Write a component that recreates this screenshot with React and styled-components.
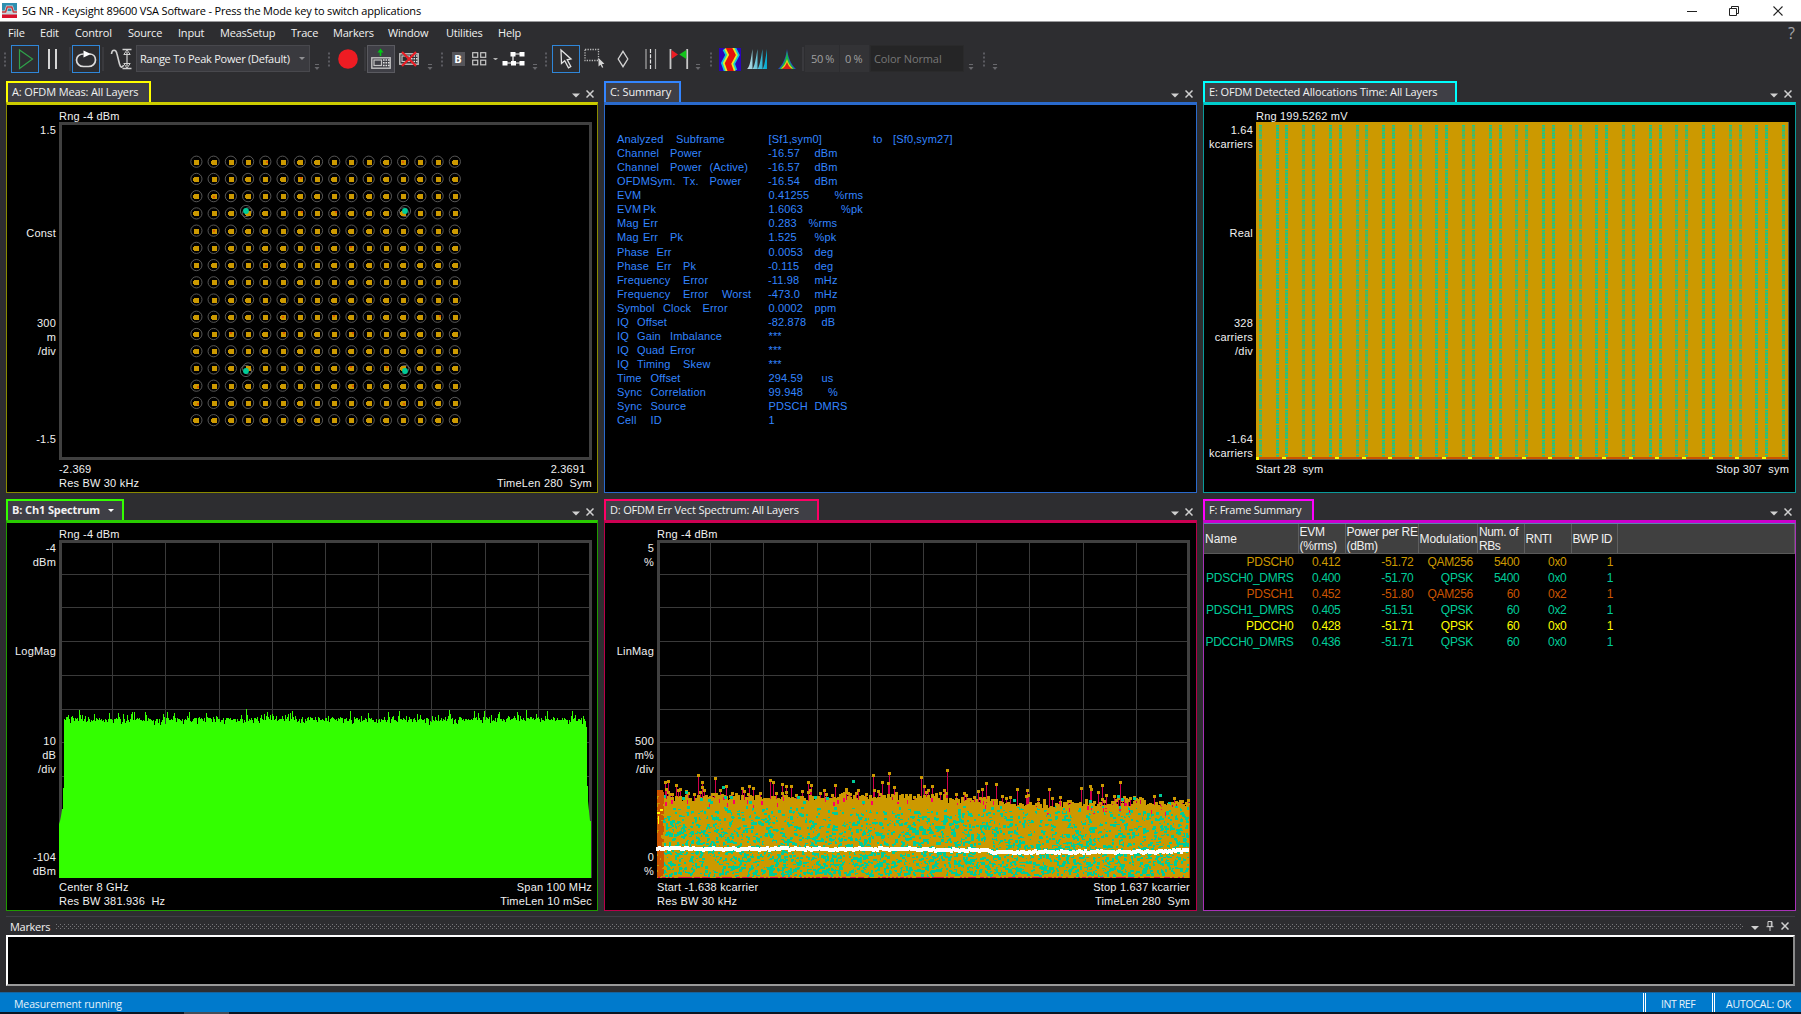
import React from "react";
import styled, { createGlobalStyle, css } from "styled-components";

const GlobalStyle = createGlobalStyle`
  * { box-sizing: border-box; }
  html, body { margin: 0; padding: 0; background: #2d2d30; }
  body { overflow: hidden; }
`;

const UI_FONT = `"Open Sans", "Noto Sans", sans-serif`;
const PLOT_FONT = `"Liberation Sans", Arial, sans-serif`;

const GOLD = "#cc9900";
const TEAL = "#00cc99";
const RUST = "#cc5500";
const YELLOW = "#ffff00";

/* ---------- application shell ---------- */

const Shell = styled.div`
  width: 1801px;
  height: 1014px;
  display: flex;
  flex-direction: column;
  background: #2d2d30;
  color: #f1f1f1;
  font-family: ${UI_FONT};
  font-size: 11px;
  overflow: hidden;
`;

const TitleBar = styled.header`
  flex: 0 0 22px;
  display: flex;
  align-items: center;
  padding-left: 2px;
  background: #fff;
  color: #000;
  border-bottom: 1px solid #9b9b9d;
`;

const TitleText = styled.span`
  flex: 1;
  margin-left: 4px;
  letter-spacing: ${(p) => p.$track}px;
  white-space: nowrap;
`;

const WindowButton = styled.span`
  flex: 0 0 ${(p) => p.$w}px;
  display: flex;
  justify-content: center;
`;

const MenuBar = styled.nav`
  flex: 0 0 22px;
  display: flex;
  align-items: center;
  padding-left: 8px;
`;

const MenuItem = styled.span`
  flex: 0 0 ${(p) => p.$w}px;
  min-width: 0;
  line-height: 16px;
  letter-spacing: ${(p) => p.$track || 0}px;
  white-space: nowrap;
`;

const HelpMark = styled.span`
  margin-left: auto;
  margin-right: 6px;
  font-size: 16px;
  line-height: 16px;
  color: #a4a4a8;
`;

/* ---------- toolbar ---------- */

const ToolBar = styled.div`
  flex: 0 0 37px;
  display: flex;
  align-items: flex-start;
  padding-top: 1px;
`;

const Tool = styled.span`
  flex: 0 0 ${(p) => p.$w}px;
  min-width: 0;
  height: ${(p) => p.$h || 28}px;
  display: flex;
  align-items: center;
  justify-content: center;
  ${(p) =>
    p.$frame &&
    css`
      border: 1px solid ${p.$frame};
      background: ${p.$fill || "transparent"};
    `}
  svg { display: block; flex: none; }
`;

const Combo = styled.span`
  flex: 0 0 ${(p) => p.$w}px;
  min-width: 0;
  height: 27px;
  display: flex;
  align-items: center;
  padding: 0 4px 0 ${(p) => p.$pad || 4}px;
  background: ${(p) => p.$bg};
  border: 1px solid ${(p) => p.$line};
  color: ${(p) => p.$ink};
  letter-spacing: ${(p) => p.$track || 0}px;
  margin-right: ${(p) => p.$after || 0}px;
  white-space: nowrap;
`;

const ComboText = styled.span`
  flex: 1;
`;

/* ---------- trace panels ---------- */

const Workspace = styled.main`
  flex: 0 0 830px;
  display: grid;
  grid-template-columns: 592px 593px 593px;
  grid-template-rows: 412px 412px;
  gap: 6px;
  padding-left: 6px;
`;

const Panel = styled.section`
  display: flex;
  flex-direction: column;
  min-width: 0;
  min-height: 0;
`;

const TabStrip = styled.div`
  flex: 0 0 21px;
  min-height: 0;
  display: flex;
  align-items: stretch;
  padding-right: 1px;
`;

const Tab = styled.div`
  width: ${(p) => p.$w}px;
  border: 2px solid ${(p) => p.$color};
  border-bottom: 0;
  background: #3f3f46;
  display: flex;
  align-items: center;
  gap: 8px;
  padding: 0 0 1px 4px;
  font-weight: ${(p) => (p.$active ? 700 : 400)};
  letter-spacing: ${(p) => p.$track || 0}px;
  white-space: nowrap;
  line-height: 16px;
`;

const StripButtons = styled.div`
  margin-left: auto;
  display: flex;
  align-items: center;
  padding-top: 4px;
`;

const Screen = styled.div`
  flex: 1;
  background: #000;
  border: 1px solid ${(p) => p.$edge};
  border-top: 3px solid ${(p) => p.$bar};
  font-family: ${PLOT_FONT};
  font-size: 11px;
  line-height: 14px;
  min-height: 0;
`;

const PlotGrid = styled.div`
  display: grid;
  grid-template-columns: 52px 533px;
  grid-template-rows: 17px 338px 28px;
  white-space: pre;
  letter-spacing: 0.2px;
`;

const RangeText = styled.div`
  grid-column: 2;
  padding-top: 4px;
  line-height: 15px;
`;

const AxisColumn = styled.div`
  display: grid;
  grid-template-rows: 103px 90px 116px 28px;
  padding: 1px 3px 0 0;
  text-align: right;
`;

const PlotArea = styled.div`
  svg { display: block; }
`;

const Footer = styled.div`
  grid-column: 2;
  display: flex;
  justify-content: space-between;
  padding-top: 2px;
`;

const FooterSide = styled.div`
  text-align: ${(p) => p.$align || "left"};
`;

/* ---------- summary text ---------- */

const SummaryList = styled.div`
  padding: 27px 0 0 12px;
  color: #3385ff;
`;

const SummaryRow = styled.div`
  display: flex;
  height: 14.07px;
  line-height: 14px;
`;

const Word = styled.span`
  flex: 0 0 ${(p) => p.$w}px;
  min-width: 0;
  white-space: nowrap;
  letter-spacing: 0.15px;
`;

/* ---------- frame summary table ---------- */

const FrameTable = styled.div`
  border-top: 1px solid #5b86b0;
`;

const HeadRow = styled.div`
  display: flex;
  height: 30px;
  background: #404040;
  border-bottom: 1px solid #5a5a5a;
`;

const HeadCell = styled.div`
  flex: ${(p) => (p.$w ? `0 0 ${p.$w}px` : 1)};
  min-width: 0;
  display: flex;
  align-items: center;
  padding-left: 1px;
  border-right: 1px solid #5e5e5e;
  font-size: 12px;
  line-height: 14px;
  white-space: pre;
  letter-spacing: ${(p) => p.$track || 0}px;
`;

const DataRow = styled.div`
  display: flex;
  height: 15.95px;
  font-size: 12px;
  line-height: 16px;
  color: ${(p) => p.$ink};
`;

const DataCell = styled.div`
  flex: 0 0 ${(p) => p.$w}px;
  min-width: 0;
  padding-right: 5px;
  text-align: right;
  white-space: nowrap;
  letter-spacing: -0.3px;
`;

/* ---------- markers and status ---------- */

const MarkersPanel = styled.section`
  flex: 0 0 70px;
  margin: 5px 6px 6px 6px;
  display: flex;
  flex-direction: column;
  border-top: 1px solid #3f3f46;
`;

const MarkersHead = styled.div`
  flex: 0 0 18px;
  display: flex;
  align-items: center;
  padding-left: 4px;
`;

const Grip = styled.span`
  flex: 0 0 1688px;
  height: 5px;
  margin-left: 6px;
  background-image: linear-gradient(90deg, #77777a 1px, transparent 1px),
    linear-gradient(90deg, transparent 2px, #77777a 2px, #77777a 3px, transparent 3px),
    linear-gradient(90deg, #77777a 1px, transparent 1px);
  background-size: 4px 1px, 4px 1px, 4px 1px;
  background-position: 0 0, 0 2px, 0 4px;
  background-repeat: repeat-x;
`;

const MarkersTitle = styled.span`
  flex: 0 0 40px;
  min-width: 0;
  letter-spacing: ${(p) => p.$track || 0}px;
`;

const MarkersBody = styled.div`
  flex: 1;
  background: #000;
  border: 2px solid #fff;
  border-right-color: #8a8a8a;
  border-bottom-color: #9a9a9a;
`;

const StatusBar = styled.footer`
  flex: 0 0 20px;
  display: flex;
  align-items: stretch;
  background: #007acc;
  border-top: 1px solid #16639c;
  font-size: 10.5px;
  line-height: 15px;
  color: #e6f2fb;
`;

const StatusText = styled.span`
  flex: 1;
  padding: 4px 0 0 14px;
  letter-spacing: ${(p) => p.$track || 0}px;
`;

const StatusCell = styled.span`
  flex: 0 0 ${(p) => p.$w}px;
  min-width: 0;
  border-left: 3px double #fff;
  padding: 4px 0 0 ${(p) => p.$pad}px;
  letter-spacing: ${(p) => p.$track || 0}px;
  white-space: nowrap;
`;

const TaskEdge = styled.div`
  flex: 0 0 2px;
  background: #0b1622;
  padding-left: 184px;
  &::before {
    content: "";
    display: block;
    width: 45px;
    height: 2px;
    background: #474e57;
  }
`;

/* ---------- icons ---------- */

const Svg = ({ w, h, children }) => (
  <svg width={w} height={h} viewBox={`0 0 ${w} ${h}`} fill="none">
    {children}
  </svg>
);

const GripDots = () => (
  <Svg w={3} h={28}>
    {[8, 12, 16, 20].map((y) => (
      <rect key={y} x="0" y={y - 0.5} width="2" height="2" fill="#5b5b60" />
    ))}
  </Svg>
);

const Overflow = () => (
  <Svg w={6} h={28}>
    <path d="M1 19.5h4" stroke="#68686c" />
    <path d="M0.5 22h5L3 25z" fill="#68686c" />
  </Svg>
);

const Separator = () => (
  <Svg w={2} h={28}>
    <path d="M1 2v24" stroke="#46464a" />
  </Svg>
);

const Caret = ({ color = "#c8c8c8", w = 8 }) => (
  <Svg w={w} h={w / 2}>
    <path d={`M0 0h${w}L${w / 2} ${w / 2}z`} fill={color} />
  </Svg>
);

const CloseX = ({ size = 8, color = "#d0d0d0", width = 1.5 }) => (
  <Svg w={size} h={size}>
    <path d={`M.5 .5L${size - 0.5} ${size - 0.5}M${size - 0.5} .5L.5 ${size - 0.5}`} stroke={color} strokeWidth={width} />
  </Svg>
);

const AppIcon = () => (
  <Svg w={16} h={16}>
    <rect x="0" y="0" width="15" height="9" fill="#2f8fb0" />
    <rect x="0" y="8" width="15" height="4" fill="#c4d2d8" />
    <rect x="0" y="11.5" width="15" height="3.5" fill="#d8122d" />
    <path d="M0 9h3.600L5.200 4h4.600l1.600 5H15" stroke="#c9dde4" strokeWidth="2.800" />
    <path d="M0 9h3.600L5.200 4h4.600l1.600 5H15" stroke="#c8383c" strokeWidth="1.500" />
  </Svg>
);

const PlayIcon = () => (
  <Svg w={26} h={26}>
    <path d="M7.5 4v18.5L20.5 13z" stroke="#2fa04a" strokeWidth="1.2" />
  </Svg>
);

const PauseIcon = () => (
  <Svg w={12} h={22}>
    <path d="M2 1v20M9 1v20" stroke="#d6d6d6" strokeWidth="2" />
  </Svg>
);

const LoopIcon = () => (
  <Svg w={24} h={24}>
    <path d="M9.5 7C5.5 7 2.5 9.500 2.500 13s3 6.500 7 6.500h5c4 0 7-3 7-6.500s-2.500-6-6-6" stroke="#dcdcdc" strokeWidth="1.7" />
    <path d="M9.500 3.500v7L17 7z" fill="#fff" />
  </Svg>
);

const RangeIcon = () => (
  <Svg w={22} h={24}>
    <path d="M1.500 7C2 2 6 2 7 7l2.500 10c1 4 3 4 4 1" stroke="#d0d0d0" strokeWidth="1.6" />
    <path d="M12.500 2.500h9M12.500 21.500h9" stroke="#d0d0d0" strokeWidth="1.4" />
    <path d="M17 5v14" stroke="#d0d0d0" strokeWidth="1.2" />
    <path d="M17 3l3.200 4.500h-6.400zM17 21l3.200-4.500h-6.400z" stroke="#d0d0d0" />
  </Svg>
);

const RecordIcon = () => (
  <Svg w={20} h={20}>
    <circle cx="10" cy="10" r="9.800" fill="#ee1c23" />
  </Svg>
);

const Instrument = () => (
  <>
    <rect x=".8" y="9.800" width="18.400" height="10.400" stroke="#c4c4c4" strokeWidth="1.400" />
    <rect x="3" y="12" width="7.500" height="5.500" stroke="#c4c4c4" strokeWidth="1.200" />
    {[12, 14.7, 17.4].map((y) => (
      <path key={y} d={`M12 ${y}h1.600M14.500 ${y}h1.600M17 ${y}h1.600`} stroke="#e0e0e0" strokeWidth="1.500" />
    ))}
  </>
);

const InstrumentOnIcon = () => (
  <Svg w={20} h={22}>
    <Instrument />
    <path d="M9.500 8V4" stroke="#00c814" strokeWidth="1.600" />
    <path d="M6.500 4.500h6L9.500 .5z" fill="#00c814" />
  </Svg>
);

const InstrumentOffIcon = () => (
  <Svg w={20} h={28}>
    <g transform="translate(0 -1)">
      <Instrument />
    </g>
    <path d="M3 7l14 14M17 7L3 21" stroke="#e81e25" strokeWidth="2.200" />
  </Svg>
);

const BoldBadge = styled.span`
  width: 13px;
  height: 14px;
  background: #55555a;
  color: #fff;
  font-size: 11px;
  line-height: 14px;
  font-weight: 700;
  text-align: center;
`;

const LayoutIcon = () => (
  <Svg w={16} h={14}>
    {[0, 8].map((x) =>
      [0, 7.5].map((y) => (
        <rect key={`${x}-${y}`} x={x + 0.7} y={y + 0.7} width="5" height="4.600" stroke="#c8c8c8" strokeWidth="1.200" />
      ))
    )}
  </Svg>
);

const BlocksIcon = () => (
  <Svg w={24} h={16}>
    <path d="M10.500 3h9M3 12h18M11 3v9" stroke="#fff" strokeWidth="1.200" />
    {[[8.5, 1], [17.5, 1], [0.5, 10], [9, 10], [17.5, 10]].map(([x, y]) => (
      <rect key={`${x}-${y}`} x={x} y={y} width="5" height="4.500" fill="#fff" />
    ))}
  </Svg>
);

const PointerIcon = () => (
  <Svg w={14} h={22}>
    <path d="M2 2l.5 13.500 3.200-2.700 3.800 7 2.300-1.300-3.600-6.700 3.800-.8z" stroke="#e2e2e2" strokeWidth="1.300" />
  </Svg>
);

const SelectIcon = () => (
  <Svg w={21} h={22}>
    <rect x="1" y="1.500" width="13.500" height="11" stroke="#b8b8b8" strokeWidth="1.300" strokeDasharray="1.300 1.200" />
    <path d="M14.500 10v8.500l2-1.700 1.600 3 1.200-.6-1.500-3 2.600-.4z" fill="#d6d6d6" />
  </Svg>
);

const DiamondIcon = () => (
  <Svg w={12} h={18}>
    <path d="M6 1.300L10.800 9 6 16.700 1.200 9z" stroke="#d4d4d4" strokeWidth="1.300" />
  </Svg>
);

const BandIcon = () => (
  <Svg w={12} h={22}>
    <path d="M1 1v20M10.500 1v20" stroke="#a8a8a8" strokeWidth="1.200" />
    <path d="M5.500 1v20" stroke="#e6e6e6" strokeWidth="1.200" strokeDasharray="4 1.300" />
  </Svg>
);

const FlagsIcon = () => (
  <Svg w={20} h={22}>
    <path d="M1.500 1v20M18.200 1v20" stroke="#c8c8c8" strokeWidth="1.800" />
    <path d="M2.500 2l6.500 4.500-6.500 4.500z" fill="#ee1c23" />
    <path d="M17.300 2l-7 4.500 7 4.500z" fill="#12c41a" />
  </Svg>
);

const SpectrogramIcon = () => (
  <Svg w={22} h={23}>
    <rect width="22" height="23" fill="#2a05b8" />
    {[["#12c8d8", 13], ["#e8ee20", 9.5], ["#e81208", 6]].map(([c, w]) => (
      <path key={c} d="M9.500 -1L13.500 7 9 15.500 12 24" stroke={c} strokeWidth={w} />
    ))}
  </Svg>
);

const WaterfallIcon = () => (
  <Svg w={22} h={22}>
    <defs>
      <linearGradient id="fall" x1="0" x2="1">
        <stop offset="0" stopColor="#c8dce0" />
        <stop offset="1" stopColor="#00a8d0" />
      </linearGradient>
    </defs>
    <path
      d="M0 21C3 19 4 10 5.500 1v20zM5.500 21C7.500 19 9 10 10.500 1v20zM10.500 21c2-2 3.500-11 5-20v20zM15.500 21c2-2 3-11 4.500-20v20z"
      fill="url(#fall)"
    />
  </Svg>
);

const PersistenceIcon = () => (
  <Svg w={18} h={22}>
    <path d="M9 1c1 8 4 16 9 20H0C5 17 8 9 9 1z" fill="#2a48c8" />
    <path d="M9 3c1 8 3.500 14 7.500 18h-15C5.500 17 8 11 9 3z" fill="#18b848" />
    <path d="M9 11c1 4 3 7 6 9.500H3C6 18 8 15 9 11z" fill="#e8d818" />
    <path d="M9 14c1 3 2.500 5 5 7H4c2.500-2 4-4 5-7z" fill="#d82018" />
  </Svg>
);

const PinIcon = () => (
  <Svg w={8} h={10}>
    <path d="M2 .5h4v5H2zM.5 5.700h7M4 6v4M5.300 .5v5" stroke="#d0d0d0" />
  </Svg>
);

/* ---------- plot drawings ---------- */

const PW = 533;
const PH = 338;

function makeRandom(seed) {
  let s = seed;
  return () => {
    s = (s * 1664525 + 1013904223) % 4294967296;
    return s / 4294967296;
  };
}

const box = (x, y, w, h) => `M${x} ${y}h${w}v${h}h-${w}z`;

const Frame = () => (
  <rect x="1.500" y="1.500" width={PW - 3} height={PH - 3} stroke="#404040" strokeWidth="3" fill="none" />
);

const GridLines = () => {
  let d = "";
  for (let i = 1; i < 10; i++) {
    d += box(Math.round(i * 53.2), 3, 1, PH - 6) + box(3, Math.round(i * 33.7), PW - 6, 1);
  }
  return <path d={d} fill="#3a3a3a" />;
};

function Constellation() {
  const rnd = makeRandom(7);
  const step = 17.23;
  const rings = [];
  let dots = "";
  let hot = "";
  for (let r = 0; r < 16; r++) {
    for (let c = 0; c < 16; c++) {
      const x = 137.4 + c * step;
      const y = 39.7 + r * step;
      rings.push(<circle key={`${r}-${c}`} cx={x} cy={y} r="5.600" />);
      const px = Math.round(x) - 2;
      const py = Math.round(y) - 2;
      dots += box(px, py, 5, 5) + (rnd() > 0.5 ? box(px - 1, py + 1, 6, 3) : "");
      if (rnd() > 0.93) hot += box(px + 1 + Math.floor(rnd() * 3), py + Math.floor(rnd() * 3), 2, 2);
    }
  }
  const pilots = [[187, 89], [346, 89], [187, 249], [346, 249]];
  return (
    <svg width={PW} height={PH}>
      <Frame />
      <g fill="none" stroke="#606060" strokeWidth=".9">
        {rings}
        {pilots.map(([x, y]) => (
          <circle key={`${x}-${y}`} cx={x} cy={y} r="5.600" />
        ))}
      </g>
      <path d={dots} fill={GOLD} shapeRendering="crispEdges" />
      <path d={hot} fill="#dd5a00" shapeRendering="crispEdges" />
      {pilots.map(([x, y]) => (
        <circle key={`${x}-${y}`} cx={x} cy={y} r="2.900" fill={TEAL} />
      ))}
    </svg>
  );
}

function Spectrum() {
  const rnd = makeRandom(21);
  let d = `M0 ${PH}V284L1 281 2 276 3 270V269h1V248h1V184`;
  for (let x = 5; x < 527; x++) {
    const n = rnd();
    let y = 180 - Math.round(rnd() * 3) + Math.round(rnd() * 2);
    if (n > 0.95) y -= 5 + Math.round(rnd() * 4);
    else if (n > 0.72) y -= 2 + Math.round(rnd() * 2);
    else if (n < 0.12) y += 3;
    d += `V${y}h1`;
  }
  d += `V187h1V246h1V261l2 20h1V${PH}z`;
  return (
    <svg width={PW} height={PH}>
      <GridLines />
      <Frame />
      <path d={d} fill="#33ff00" />
    </svg>
  );
}

const SPIKES = [
  [41, 235], [58, 238], [216, 235], [232, 233], [264, 237], [290, 230], [463, 242], [329, 243], [339, 244],
  [113, 240], [116, 242], [151, 242], [11, 241], [8, 242], [433, 246], [445, 245], [125, 244], [129, 246],
  [134, 246], [154, 245], [45, 242], [92, 246], [96, 248], [225, 242], [231, 243], [360, 249], [370, 250],
  [178, 245], [189, 249], [392, 249], [424, 248], [434, 249],
];

function ErrorVector() {
  const rnd = makeRandom(99);
  const top = (x) => {
    if (x < 220) return 258;
    if (x < 290) return 257;
    if (x < 340) return 260;
    if (x < 400) return 265;
    return 264;
  };
  let stems = "";
  let body = "";
  let teal = "";
  let heads = "";
  let gaps = "";
  for (let x = 0; x < PW - 2; x += 2) {
    const y = top(x) + Math.round((rnd() - 0.5) * 7);
    body += box(x, y, 3, PH - y);
    if (rnd() > 0.45) {
      const up = Math.round(y - 2 - rnd() * rnd() * 13);
      heads += box(x, up, 3, 3);
      stems += box(x + 1, up + 2, 1, y - up);
    }
    if (rnd() > 0.83) gaps += box(x, y + 1 + Math.round(rnd() * 4), 1 + Math.round(rnd()), 4);
  }
  SPIKES.forEach(([x, y]) => {
    heads += box(x - 1, y - 1, 3, 3);
    stems += box(x, y, 1, 270 - y);
  });
  for (let i = 0; i < 3000; i++) {
    const x = Math.floor(rnd() * 525) + 6;
    const y = 266 + Math.floor(Math.pow(rnd(), 0.72) * 69);
    teal += box(x, y, rnd() > 0.5 ? 3 : 2, rnd() > 0.5 ? 3 : 2);
  }
  for (let i = 0; i < 20; i++) teal += box(Math.floor(rnd() * 525), 254 + Math.floor(rnd() * 10), 3, 3);
  teal += box(195, 240, 3, 3) + box(65, 246, 3, 3) + box(28, 251, 3, 3);
  let over = "";
  for (let i = 0; i < 1900; i++) {
    over += box(Math.floor(rnd() * 527) + 3, 264 + Math.floor(rnd() * 72), 3, 2);
  }
  let rust = "";
  for (let i = 0; i < 170; i++) rust += box(Math.floor(rnd() * 5), 250 + Math.floor(rnd() * 85), 3, 3);
  let mean = "";
  let base = "";
  for (let x = -1; x < PW - 2; x += 2) {
    const level = x < 30 ? 306.5 : x < 270 ? 307 : x < 330 ? 308 : x < 500 ? 310 : 309;
    mean += box(x, Math.round(level + (rnd() - 0.5) * 1.6), 3, 4);
    if (rnd() > 0.4) base += box(Math.max(x, 0), 337, 2, 1);
  }
  return (
    <svg width={PW} height={PH} shapeRendering="crispEdges" overflow="visible">
      <GridLines />
      <Frame />
      <path d={stems} fill="#d0004c" />
      <path d={body} fill={GOLD} />
      <path d={gaps} fill="#ff0066" />
      <path d={heads} fill={GOLD} />
      <path d={teal} fill={TEAL} />
      <path d={over} fill={GOLD} />
      <path d={rust} fill={RUST} />
      <path d={box(3, 269, 3, 2) + box(0, 272, 3, 2) + box(1, 276, 1, 8)} fill={YELLOW} />
      <path d={box(532, 265, 1, 73)} fill={RUST} />
      <path d={base} fill="#e0104c" />
      <path d={mean} fill="#fff" />
    </svg>
  );
}

function Allocations() {
  let faint = "";
  let bright = "";
  let marks = box(0, 335, 3, 3);
  for (let i = 0; i < 20; i++) {
    [2.8, 19.6].forEach((off, k) => {
      const x = Math.round(i * 26.65 + off);
      const strong = (i + k) % 2;
      for (let y = 3; y < 334; y += 15) {
        const h = Math.min(14, 336 - y);
        faint += box(x, y, 3, h);
        [0, 3, 5, 8, 10, 12].forEach((dy, j) => {
          if (y + dy < 335 && (strong || j % 2 === 0)) bright += box(x, y + dy, 3, 1);
        });
      }
    });
    if (i) marks += box(Math.round(i * 26.68 - 1), 335, 4, 2);
  }
  return (
    <svg width={PW} height={PH} shapeRendering="crispEdges">
      <rect width={PW} height={PH} fill="#5a5a50" />
      <rect width={PW - 1} height={PH - 1} fill={GOLD} />
      <path d={faint} fill="#66b04d" />
      <path d={bright} fill="#12c890" />
      <rect y="335" width={PW - 1} height="2" fill={RUST} />
      <path d={marks} fill={YELLOW} />
    </svg>
  );
}

/* ---------- panels ---------- */

const TracePanel = ({ title, tabWidth, track, color, bar, edge, active, children }) => (
  <Panel>
    <TabStrip>
      <Tab $w={tabWidth} $color={color} $active={active} $track={track}>
        {title}
        {active && <Caret color="#fff" w={6} />}
      </Tab>
      <StripButtons>
        <Tool $w={15} $h={12}>
          <Svg w={8} h={10}><path d="M0 4.500h8L4 8.500z" fill="#d0d0d0" /></Svg>
        </Tool>
        <Tool $w={14} $h={12}>
          <CloseX />
        </Tool>
      </StripButtons>
    </TabStrip>
    <Screen $bar={bar} $edge={edge}>{children}</Screen>
  </Panel>
);

const Plot = ({ range, axis, left, right, children }) => (
  <PlotGrid>
    <RangeText>{range}</RangeText>
    <AxisColumn>
      {axis.map((t) => (
        <div key={t}>{t}</div>
      ))}
    </AxisColumn>
    <PlotArea>{children}</PlotArea>
    <Footer>
      <FooterSide>{left}</FooterSide>
      <FooterSide $align="right">{right}</FooterSide>
    </Footer>
  </PlotGrid>
);

/* Each word carries the tab stop at which it starts, in pixels from the row's left edge. */
const SUMMARY = [
  [["Analyzed", 0], ["Subframe", 59], ["[Sf1,sym0]", 151.500], ["to", 256], ["[Sf0,sym27]", 276]],
  [["Channel", 0], ["Power", 53], ["-16.57", 151], ["dBm", 197.500]],
  [["Channel", 0], ["Power", 53], ["(Active)", 92.500], ["-16.57", 151], ["dBm", 197.500]],
  [["OFDMSym.", 0], ["Tx.", 66], ["Power", 92.500], ["-16.54", 151], ["dBm", 197.500]],
  [["EVM", 0], ["0.41255", 151.500], ["%rms", 217.500]],
  [["EVM", 0], ["Pk", 26], ["1.6063", 151.500], ["%pk", 224]],
  [["Mag", 0], ["Err", 26], ["0.283", 151.500], ["%rms", 191.500]],
  [["Mag", 0], ["Err", 26], ["Pk", 53], ["1.525", 151.500], ["%pk", 197.500]],
  [["Phase", 0], ["Err", 39.500], ["0.0053", 151.500], ["deg", 197.500]],
  [["Phase", 0], ["Err", 39.500], ["Pk", 66], ["-0.115", 151], ["deg", 197.500]],
  [["Frequency", 0], ["Error", 66], ["-11.98", 151], ["mHz", 197.500]],
  [["Frequency", 0], ["Error", 66], ["Worst", 105], ["-473.0", 151], ["mHz", 197.500]],
  [["Symbol", 0], ["Clock", 46], ["Error", 85.500], ["0.0002", 151.500], ["ppm", 197.500]],
  [["IQ", 0], ["Offset", 20], ["-82.878", 151], ["dB", 204.500]],
  [["IQ", 0], ["Gain", 20], ["Imbalance", 53], ["***", 151.500]],
  [["IQ", 0], ["Quad", 20], ["Error", 53], ["***", 151.500]],
  [["IQ", 0], ["Timing", 20], ["Skew", 66], ["***", 151.500]],
  [["Time", 0], ["Offset", 33.500], ["294.59", 151.500], ["us", 204.500]],
  [["Sync", 0], ["Correlation", 33.500], ["99.948", 151.500], ["%", 211]],
  [["Sync", 0], ["Source", 33.500], ["PDSCH", 151.500], ["DMRS", 197.500]],
  [["Cell", 0], ["ID", 33.500], ["1", 151.500]],
];

const Summary = () => (
  <SummaryList>
    {SUMMARY.map((words, r) => (
      <SummaryRow key={r}>
        {words.map(([text, at], i) => (
          <Word key={i} $w={(words[i + 1] ? words[i + 1][1] : at + 60) - at}>{text}</Word>
        ))}
      </SummaryRow>
    ))}
  </SummaryList>
);

const COLUMNS = [
  ["Name", 94.500, 0], ["EVM\n(%rms)", 47, -0.25], ["Power per RE\n(dBm)", 73, -0.3], ["Modulation", 59.500, -0.1],
  ["Num. of\nRBs", 46.500, -0.4], ["RNTI", 47, -0.5], ["BWP ID", 46.500, -0.5],
];

const FRAMES = [
  [GOLD, "PDSCH0", "0.412", "-51.72", "QAM256", "5400", "0x0", "1"],
  [TEAL, "PDSCH0_DMRS", "0.400", "-51.70", "QPSK", "5400", "0x0", "1"],
  [RUST, "PDSCH1", "0.452", "-51.80", "QAM256", "60", "0x2", "1"],
  [TEAL, "PDSCH1_DMRS", "0.405", "-51.51", "QPSK", "60", "0x2", "1"],
  [YELLOW, "PDCCH0", "0.428", "-51.71", "QPSK", "60", "0x0", "1"],
  [TEAL, "PDCCH0_DMRS", "0.436", "-51.71", "QPSK", "60", "0x0", "1"],
];

const FrameSummary = () => (
  <FrameTable>
    <HeadRow>
      {COLUMNS.map(([name, w, track]) => (
        <HeadCell key={name} $w={w} $track={track}>{name}</HeadCell>
      ))}
      <HeadCell />
    </HeadRow>
    {FRAMES.map(([ink, ...cells]) => (
      <DataRow key={cells[0]} $ink={ink}>
        {cells.map((c, i) => (
          <DataCell key={i} $w={COLUMNS[i][1]}>{c}</DataCell>
        ))}
      </DataRow>
    ))}
  </FrameTable>
);

const MENU = [
  ["File", 32], ["Edit", 35], ["Control", 53], ["Source", 50], ["Input", 42], ["MeasSetup", 71],
  ["Trace", 42], ["Markers", 55], ["Window", 58], ["Utilities", 52], ["Help", 30],
];

export default function App() {
  return (
    <Shell>
      <GlobalStyle />
      <TitleBar>
        <AppIcon />
        <TitleText $track={-0.17}>5G NR - Keysight 89600 VSA Software - Press the Mode key to switch applications</TitleText>
        <WindowButton $w={44}><Svg w={10} h={10}><path d="M0 5.500h10" stroke="#222" /></Svg></WindowButton>
        <WindowButton $w={40}>
          <Svg w={10} h={10}><path d="M.5 2.500h7v7h-7zM2.500 2V.5h7v7H8" stroke="#222" /></Svg>
        </WindowButton>
        <WindowButton $w={47}><CloseX size={10} color="#222" width={1.1} /></WindowButton>
      </TitleBar>

      <MenuBar>
        {MENU.map(([name, w]) => (
          <MenuItem key={name} $w={w} $track={-0.2}>{name}</MenuItem>
        ))}
        <HelpMark>?</HelpMark>
      </MenuBar>

      <ToolBar>
        <Tool $w={11}><GripDots /></Tool>
        <Tool $w={28} $frame="#2f86d8"><PlayIcon /></Tool>
        <Tool $w={28}><PauseIcon /></Tool>
        <Tool $w={5}><Separator /></Tool>
        <Tool $w={28} $frame="#2f86d8"><LoopIcon /></Tool>
        <Tool $w={5}><Separator /></Tool>
        <Tool $w={31}><RangeIcon /></Tool>
        <Combo $w={174} $bg="#3a3a3f" $line="#48484d" $ink="#f1f1f1" $track={-0.25} $pad={3}>
          <ComboText>Range To Peak Power (Default)</ComboText>
          <Caret color="#8f8f93" w={6} />
        </Combo>
        <Tool $w={14}><Overflow /></Tool>
        <Tool $w={10}><GripDots /></Tool>
        <Tool $w={28}><RecordIcon /></Tool>
        <Tool $w={5}><Separator /></Tool>
        <Tool $w={28} $frame="#5a5a60" $fill="#3f3f46"><InstrumentOnIcon /></Tool>
        <Tool $w={28}><InstrumentOffIcon /></Tool>
        <Tool $w={13}><Overflow /></Tool>
        <Tool $w={12}><GripDots /></Tool>
        <Tool $w={20}><BoldBadge>B</BoldBadge></Tool>
        <Tool $w={24}><LayoutIcon /></Tool>
        <Tool $w={6}><Caret color="#b0b0b0" w={5} /></Tool>
        <Tool $w={32}><BlocksIcon /></Tool>
        <Tool $w={10}><Overflow /></Tool>
        <Tool $w={12}><GripDots /></Tool>
        <Tool $w={28} $frame="#2f86d8"><PointerIcon /></Tool>
        <Tool $w={29}><SelectIcon /></Tool>
        <Tool $w={27}><DiamondIcon /></Tool>
        <Tool $w={30}><BandIcon /></Tool>
        <Tool $w={25}><FlagsIcon /></Tool>
        <Tool $w={14}><Overflow /></Tool>
        <Tool $w={12}><GripDots /></Tool>
        <Tool $w={26}><SpectrogramIcon /></Tool>
        <Tool $w={30}><WaterfallIcon /></Tool>
        <Tool $w={27}><PersistenceIcon /></Tool>
        <Tool $w={5}><Separator /></Tool>
        <Combo $w={34} $bg="#333336" $line="#333336" $ink="#a0a0a0" $pad={5} $after={1} $track={-0.4}>50 %</Combo>
        <Combo $w={29} $bg="#333336" $line="#333336" $ink="#a0a0a0" $pad={4} $after={1} $track={-0.3}>0 %</Combo>
        <Combo $w={94} $bg="#252526" $line="#2a2a2b" $ink="#777" $pad={3} $track={-0.1}>Color Normal</Combo>
        <Tool $w={14}><Overflow /></Tool>
        <Tool $w={12}><GripDots /></Tool>
        <Tool $w={10}><Overflow /></Tool>
      </ToolBar>

      <Workspace>
        <TracePanel title="A: OFDM Meas: All Layers" tabWidth={145} track={-0.13} color="#ffff00" bar="#cccc00" edge="#8a8a00">
          <Plot
            range="Rng -4 dBm"
            axis={["1.5", "Const", "300\nm\n/div", "-1.5"]}
            left={"-2.369\nRes BW 30 kHz"}
            right={"2.3691  \nTimeLen 280  Sym"}
          >
            <Constellation />
          </Plot>
        </TracePanel>
        <TracePanel title="C: Summary" tabWidth={77} track={-0.08} color="#3385ff" bar="#2a6acc" edge="#2a6acc">
          <Summary />
        </TracePanel>
        <TracePanel title="E: OFDM Detected Allocations Time: All Layers" tabWidth={254} track={-0.13} color="#00ffff" bar="#00cccc" edge="#0a9a9a">
          <Plot
            range="Rng 199.5262 mV"
            axis={["1.64\nkcarriers", "Real", "328\ncarriers\n/div", "-1.64\nkcarriers"]}
            left="Start 28  sym"
            right="Stop 307  sym"
          >
            <Allocations />
          </Plot>
        </TracePanel>
        <TracePanel title="B: Ch1 Spectrum" tabWidth={118} track={-0.12} active color="#33ff00" bar="#29cc00" edge="#1f9900">
          <Plot
            range="Rng -4 dBm"
            axis={["-4\ndBm", "LogMag", "10\ndB\n/div", "-104\ndBm"]}
            left={"Center 8 GHz\nRes BW 381.936  Hz"}
            right={"Span 100 MHz\nTimeLen 10 mSec"}
          >
            <Spectrum />
          </Plot>
        </TracePanel>
        <TracePanel title="D: OFDM Err Vect Spectrum: All Layers" tabWidth={215} track={-0.18} color="#ff0066" bar="#cc0052" edge="#b80049">
          <Plot
            range="Rng -4 dBm"
            axis={["5\n%", "LinMag", "500\nm%\n/div", "0\n%"]}
            left={"Start -1.638 kcarrier\nRes BW 30 kHz"}
            right={"Stop 1.637 kcarrier\nTimeLen 280  Sym"}
          >
            <ErrorVector />
          </Plot>
        </TracePanel>
        <TracePanel title="F: Frame Summary" tabWidth={111} track={-0.25} color="#ff00ff" bar="#cc00cc" edge="#a832b8">
          <FrameSummary />
        </TracePanel>
      </Workspace>

      <MarkersPanel>
        <MarkersHead>
          <MarkersTitle $track={-0.3}>Markers</MarkersTitle>
          <Grip />
          <Tool $w={22} $h={12}><Svg w={8} h={10}><path d="M0 5h8L4 9z" fill="#d0d0d0" /></Svg></Tool>
          <Tool $w={8} $h={12}><PinIcon /></Tool>
          <Tool $w={22} $h={12}><CloseX /></Tool>
        </MarkersHead>
        <MarkersBody />
      </MarkersPanel>

      <StatusBar>
        <StatusText $track={-0.1}>Measurement running</StatusText>
        <StatusCell $w={69} $pad={15} $track={-0.4}>INT REF</StatusCell>
        <StatusCell $w={89} $pad={11} $track={-0.2}>AUTOCAL: OK</StatusCell>
      </StatusBar>
      <TaskEdge />
    </Shell>
  );
}
